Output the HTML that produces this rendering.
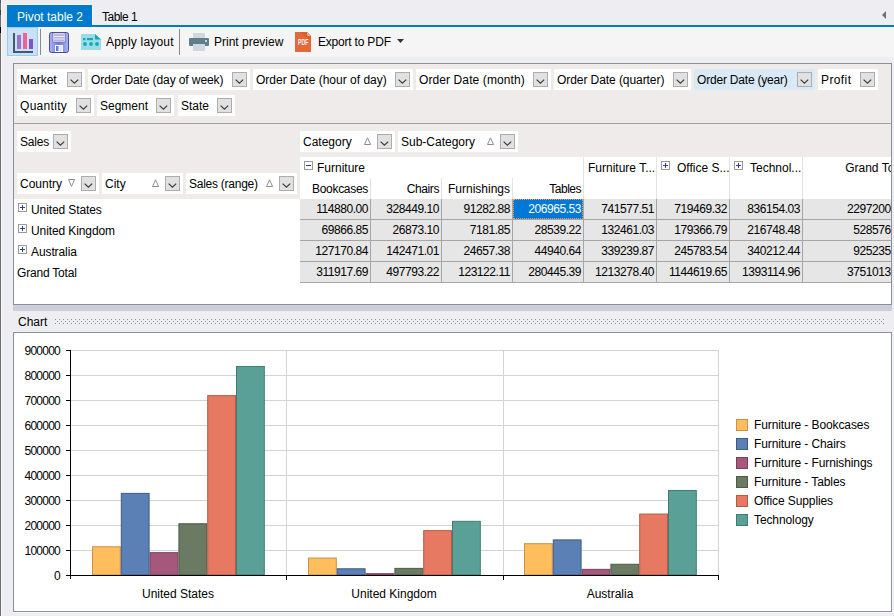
<!DOCTYPE html><html><head><meta charset="utf-8"><style>
html,body{margin:0;padding:0;}
body{width:894px;height:616px;overflow:hidden;position:relative;background:#EEEEF2;font-family:"Liberation Sans", sans-serif;font-size:12px;color:#000;}
.a{position:absolute;}
.t{position:absolute;white-space:pre;line-height:14px;font-size:12px;}
.r{text-align:right;}
.dd{position:absolute;width:13px;height:13px;border:1px solid #ADADAD;background:#E1E1E1;}
.dd svg{position:absolute;left:-1px;top:-1px;}
</style></head><body>

<div class="a" style="left:0px;top:0px;width:1px;height:616px;background:#6D6D6D"></div>
<div class="a" style="left:1px;top:0px;width:1px;height:616px;background:#F8F8F8"></div>
<div class="a" style="left:0px;top:27px;width:1px;height:6px;background:#000"></div>
<div class="a" style="left:0px;top:10px;width:1px;height:5px;background:#3A3A3A"></div>
<div class="a" style="left:0px;top:0px;width:1px;height:3px;background:#4A5A6A"></div>
<div class="a" style="left:6px;top:4px;width:87px;height:1px;background:#FBF6F4"></div>
<div class="a" style="left:92px;top:4px;width:1px;height:21px;background:#FBF6F4"></div>
<div class="a" style="left:7px;top:5px;width:85px;height:22px;background:#007ACC"></div>
<div class="t " style="left:17px;top:10px;color:#fff">Pivot table 2</div>
<div class="t " style="left:102px;top:10px;letter-spacing:-0.5px">Table 1</div>
<div class="a" style="left:7px;top:25px;width:887px;height:2px;background:#007ACC"></div>
<svg class="a" style="left:881px;top:11px" width="6" height="9"><path d="M5 0 L5 8 L1 4 Z" fill="#707070"/></svg>
<div class="a" style="left:7px;top:27px;width:887px;height:30px;background:#F5F5F5"></div>
<div class="a" style="left:7px;top:27px;width:31px;height:29px;background:#C9E0F7;box-sizing:border-box;border:1px solid #99CCF5"></div>
<svg class="a" style="left:13px;top:33px" width="21" height="21">
<rect x="0" y="0" width="2" height="20" fill="#455A64"/>
<rect x="0" y="18" width="20" height="2" fill="#455A64"/>
<rect x="4" y="2" width="4" height="14" fill="#9575CD"/>
<rect x="10" y="0" width="4" height="16" fill="#F06292"/>
<rect x="16" y="6" width="4" height="10" fill="#7E57C2"/>
</svg>
<div class="a" style="left:40px;top:29px;width:1px;height:26px;background:#8A8A8A"></div>
<svg class="a" style="left:49px;top:32px" width="21" height="21">
<defs><linearGradient id="fg" x1="0" x2="1" y1="0" y2="0"><stop offset="0" stop-color="#A8B4F4"/><stop offset="0.5" stop-color="#6C7CD8"/><stop offset="1" stop-color="#A8B4F4"/></linearGradient></defs>
<rect x="0.5" y="0.5" width="19" height="20" rx="2" fill="url(#fg)" stroke="#4C4C9C"/>
<rect x="4" y="1" width="12" height="9" fill="#fff" stroke="#5A5AA8" stroke-width="0.6"/>
<rect x="5" y="2.2" width="10" height="1.8" fill="#B4B0E0"/>
<rect x="5" y="4.8" width="10" height="1.8" fill="#B4B0E0"/>
<rect x="5" y="7.4" width="10" height="1.8" fill="#B4B0E0"/>
<rect x="6" y="13" width="8" height="7" fill="#fff"/><rect x="10.5" y="13.5" width="3" height="6" fill="#E4E4F0"/>
<rect x="7" y="14" width="2.5" height="5" fill="#5C7AE0"/>
</svg>
<svg class="a" style="left:81px;top:34px" width="20" height="16">
<path d="M0 0 L14 0 L20 5.5 L20 16 L0 16 Z" fill="#9EDCE5"/>
<path d="M14 0 L20 5.5 L14 5.5 Z" fill="#12A9BE"/>
<rect x="2" y="4" width="2.5" height="2.2" fill="#12A9BE"/>
<rect x="6" y="4" width="6" height="2.2" fill="#12A9BE"/>
<circle cx="4" cy="10" r="1.9" fill="#12A9BE"/>
<circle cx="10" cy="10" r="1.9" fill="#12A9BE"/>
<circle cx="16" cy="10" r="1.9" fill="#12A9BE"/>
</svg>
<div class="t " style="left:106px;top:35px;letter-spacing:0.2px">Apply layout</div>
<div class="a" style="left:179px;top:29px;width:1px;height:26px;background:#8A8A8A"></div>
<svg class="a" style="left:189px;top:33px" width="20" height="18">
<rect x="4" y="0" width="12" height="5" fill="#CFD8DC"/>
<rect x="0" y="5" width="20" height="8" rx="1" fill="#607D8B"/>
<rect x="4" y="11" width="12" height="7" fill="#CFD8DC"/>
<rect x="16" y="7" width="2" height="2" fill="#CFD8DC"/>
</svg>
<div class="t " style="left:214px;top:35px;">Print preview</div>
<svg class="a" style="left:295px;top:32px" width="16" height="20">
<path d="M0 0 L12 0 L16 4 L16 20 L0 20 Z" fill="#E5683A"/>
<path d="M4 0 L12 0 L16 4 L16 9 Z" fill="#D95F34"/>
<path d="M12 0 L16 4 L13.5 4 Q12 4 12 2.5 Z" fill="#F5B293"/>
<text x="3" y="13" font-family="Liberation Sans" font-weight="bold" font-size="8.5" fill="#F4F4F4" textLength="10.5" lengthAdjust="spacingAndGlyphs">PDF</text>
</svg>
<div class="t " style="left:318px;top:35px;letter-spacing:-0.2px">Export to PDF</div>
<svg class="a" style="left:397px;top:39px" width="8" height="5"><path d="M0 0 L7 0 L3.5 4 Z" fill="#333"/></svg>
<div class="a" style="left:13px;top:63px;width:879px;height:242px;box-sizing:border-box;border:1px solid #8A8F99;background:#EFEBEB"></div>
<div class="a" style="left:17px;top:69px;width:68px;height:21px;background:#fff"></div>
<div class="t " style="left:20px;top:73px;letter-spacing:0px">Market</div>
<div class="dd" style="left:67px;top:72px"><svg width="15" height="15"><path d="M3.6 7.6 L7.4 11.2 L11.2 7.6" fill="none" stroke="#3C3C3C" stroke-width="1.25"/></svg></div>
<div class="a" style="left:88px;top:69px;width:162px;height:21px;background:#fff"></div>
<div class="t " style="left:91px;top:73px;letter-spacing:-0.1px">Order Date (day of week)</div>
<div class="dd" style="left:232px;top:72px"><svg width="15" height="15"><path d="M3.6 7.6 L7.4 11.2 L11.2 7.6" fill="none" stroke="#3C3C3C" stroke-width="1.25"/></svg></div>
<div class="a" style="left:253px;top:69px;width:160px;height:21px;background:#fff"></div>
<div class="t " style="left:256px;top:73px;letter-spacing:0px">Order Date (hour of day)</div>
<div class="dd" style="left:395px;top:72px"><svg width="15" height="15"><path d="M3.6 7.6 L7.4 11.2 L11.2 7.6" fill="none" stroke="#3C3C3C" stroke-width="1.25"/></svg></div>
<div class="a" style="left:416px;top:69px;width:135px;height:21px;background:#fff"></div>
<div class="t " style="left:419px;top:73px;letter-spacing:0.1px">Order Date (month)</div>
<div class="dd" style="left:533px;top:72px"><svg width="15" height="15"><path d="M3.6 7.6 L7.4 11.2 L11.2 7.6" fill="none" stroke="#3C3C3C" stroke-width="1.25"/></svg></div>
<div class="a" style="left:554px;top:69px;width:137px;height:21px;background:#fff"></div>
<div class="t " style="left:557px;top:73px;letter-spacing:-0.07px">Order Date (quarter)</div>
<div class="dd" style="left:673px;top:72px"><svg width="15" height="15"><path d="M3.6 7.6 L7.4 11.2 L11.2 7.6" fill="none" stroke="#3C3C3C" stroke-width="1.25"/></svg></div>
<div class="a" style="left:694px;top:69px;width:121px;height:21px;background:#DAE9F8"></div>
<div class="t " style="left:697px;top:73px;letter-spacing:-0.2px">Order Date (year)</div>
<div class="dd" style="left:797px;top:72px"><svg width="15" height="15"><path d="M3.6 7.6 L7.4 11.2 L11.2 7.6" fill="none" stroke="#3C3C3C" stroke-width="1.25"/></svg></div>
<div class="a" style="left:818px;top:69px;width:60px;height:21px;background:#fff"></div>
<div class="t " style="left:821px;top:73px;letter-spacing:0.4px">Profit</div>
<div class="dd" style="left:860px;top:72px"><svg width="15" height="15"><path d="M3.6 7.6 L7.4 11.2 L11.2 7.6" fill="none" stroke="#3C3C3C" stroke-width="1.25"/></svg></div>
<div class="a" style="left:17px;top:95px;width:77px;height:21px;background:#fff"></div>
<div class="t " style="left:20px;top:99px;letter-spacing:0.3px">Quantity</div>
<div class="dd" style="left:76px;top:98px"><svg width="15" height="15"><path d="M3.6 7.6 L7.4 11.2 L11.2 7.6" fill="none" stroke="#3C3C3C" stroke-width="1.25"/></svg></div>
<div class="a" style="left:97px;top:95px;width:77px;height:21px;background:#fff"></div>
<div class="t " style="left:100px;top:99px;letter-spacing:0px">Segment</div>
<div class="dd" style="left:156px;top:98px"><svg width="15" height="15"><path d="M3.6 7.6 L7.4 11.2 L11.2 7.6" fill="none" stroke="#3C3C3C" stroke-width="1.25"/></svg></div>
<div class="a" style="left:178px;top:95px;width:57px;height:21px;background:#fff"></div>
<div class="t " style="left:181px;top:99px;letter-spacing:0px">State</div>
<div class="dd" style="left:217px;top:98px"><svg width="15" height="15"><path d="M3.6 7.6 L7.4 11.2 L11.2 7.6" fill="none" stroke="#3C3C3C" stroke-width="1.25"/></svg></div>
<div class="a" style="left:14px;top:123px;width:877px;height:1px;background:#A0A0A0"></div>
<div class="a" style="left:17px;top:131px;width:54px;height:21px;background:#fff"></div>
<div class="t " style="left:20px;top:135px;letter-spacing:-0.2px">Sales</div>
<div class="dd" style="left:53px;top:134px"><svg width="15" height="15"><path d="M3.6 7.6 L7.4 11.2 L11.2 7.6" fill="none" stroke="#3C3C3C" stroke-width="1.25"/></svg></div>
<div class="a" style="left:300px;top:131px;width:95px;height:21px;background:#fff"></div>
<div class="t " style="left:303px;top:135px;letter-spacing:0px">Category</div>
<div class="dd" style="left:377px;top:134px"><svg width="15" height="15"><path d="M3.6 7.6 L7.4 11.2 L11.2 7.6" fill="none" stroke="#3C3C3C" stroke-width="1.25"/></svg></div>
<svg class="a" style="left:364px;top:137px" width="8" height="9"><path d="M3.5 0.8 L6.6 7.5 L0.5 7.5 Z" fill="none" stroke="#8c8c8c" stroke-width="1"/></svg>
<div class="a" style="left:398px;top:131px;width:120px;height:21px;background:#fff"></div>
<div class="t " style="left:401px;top:135px;letter-spacing:0px">Sub-Category</div>
<div class="dd" style="left:500px;top:134px"><svg width="15" height="15"><path d="M3.6 7.6 L7.4 11.2 L11.2 7.6" fill="none" stroke="#3C3C3C" stroke-width="1.25"/></svg></div>
<svg class="a" style="left:487px;top:137px" width="8" height="9"><path d="M3.5 0.8 L6.6 7.5 L0.5 7.5 Z" fill="none" stroke="#8c8c8c" stroke-width="1"/></svg>
<div class="a" style="left:17px;top:173px;width:82px;height:21px;background:#fff"></div>
<div class="t " style="left:20px;top:177px;letter-spacing:0px">Country</div>
<div class="dd" style="left:81px;top:176px"><svg width="15" height="15"><path d="M3.6 7.6 L7.4 11.2 L11.2 7.6" fill="none" stroke="#3C3C3C" stroke-width="1.25"/></svg></div>
<svg class="a" style="left:68px;top:179px" width="8" height="9"><path d="M0.5 0.5 L6.6 0.5 L3.5 7.4 Z" fill="none" stroke="#8c8c8c" stroke-width="1"/></svg>
<div class="a" style="left:102px;top:173px;width:81px;height:21px;background:#fff"></div>
<div class="t " style="left:105px;top:177px;letter-spacing:0px">City</div>
<div class="dd" style="left:165px;top:176px"><svg width="15" height="15"><path d="M3.6 7.6 L7.4 11.2 L11.2 7.6" fill="none" stroke="#3C3C3C" stroke-width="1.25"/></svg></div>
<svg class="a" style="left:152px;top:179px" width="8" height="9"><path d="M3.5 0.8 L6.6 7.5 L0.5 7.5 Z" fill="none" stroke="#8c8c8c" stroke-width="1"/></svg>
<div class="a" style="left:186px;top:173px;width:111px;height:21px;background:#fff"></div>
<div class="t " style="left:189px;top:177px;letter-spacing:-0.25px">Sales (range)</div>
<div class="dd" style="left:279px;top:176px"><svg width="15" height="15"><path d="M3.6 7.6 L7.4 11.2 L11.2 7.6" fill="none" stroke="#3C3C3C" stroke-width="1.25"/></svg></div>
<svg class="a" style="left:266px;top:179px" width="8" height="9"><path d="M3.5 0.8 L6.6 7.5 L0.5 7.5 Z" fill="none" stroke="#8c8c8c" stroke-width="1"/></svg>
<div class="a" style="left:14px;top:199px;width:286px;height:105px;background:#fff"></div>
<svg class="a" style="left:18px;top:203px" width="9" height="9"><rect x="0.5" y="0.5" width="8" height="8" fill="#fff" stroke="#9A9A9A"/><rect x="2" y="4" width="5" height="1" fill="#2B3F8C"/><rect x="4" y="2" width="1" height="5" fill="#2B3F8C"/></svg>
<div class="t " style="left:31px;top:203px;letter-spacing:-0.1px">United States</div>
<svg class="a" style="left:18px;top:224px" width="9" height="9"><rect x="0.5" y="0.5" width="8" height="8" fill="#fff" stroke="#9A9A9A"/><rect x="2" y="4" width="5" height="1" fill="#2B3F8C"/><rect x="4" y="2" width="1" height="5" fill="#2B3F8C"/></svg>
<div class="t " style="left:31px;top:224px;letter-spacing:-0.1px">United Kingdom</div>
<svg class="a" style="left:18px;top:245px" width="9" height="9"><rect x="0.5" y="0.5" width="8" height="8" fill="#fff" stroke="#9A9A9A"/><rect x="2" y="4" width="5" height="1" fill="#2B3F8C"/><rect x="4" y="2" width="1" height="5" fill="#2B3F8C"/></svg>
<div class="t " style="left:31px;top:245px;letter-spacing:-0.1px">Australia</div>
<div class="t " style="left:17px;top:266px;letter-spacing:-0.2px">Grand Total</div>
<div class="a" style="left:300px;top:157px;width:591px;height:147px;background:#fff"></div>
<svg class="a" style="left:304px;top:161px" width="9" height="9"><rect x="0.5" y="0.5" width="8" height="8" fill="#fff" stroke="#9A9A9A"/><rect x="2" y="4" width="5" height="1" fill="#2B3F8C"/></svg>
<div class="t " style="left:317px;top:161px;">Furniture</div>
<div class="a" style="left:370px;top:178px;width:1px;height:21px;background:#E3E3E3"></div>
<div class="a" style="left:441px;top:178px;width:1px;height:21px;background:#E3E3E3"></div>
<div class="a" style="left:512px;top:178px;width:1px;height:21px;background:#E3E3E3"></div>
<div class="a" style="left:583px;top:157px;width:1px;height:42px;background:#E3E3E3"></div>
<div class="a" style="left:656px;top:157px;width:1px;height:42px;background:#E3E3E3"></div>
<div class="a" style="left:729px;top:157px;width:1px;height:42px;background:#E3E3E3"></div>
<div class="a" style="left:802px;top:157px;width:1px;height:42px;background:#E3E3E3"></div>
<div class="t r " style="right:526px;top:182px;letter-spacing:-0.3px">Bookcases</div>
<div class="t r " style="right:455px;top:182px;letter-spacing:-0.4px">Chairs</div>
<div class="t r " style="right:384px;top:182px;">Furnishings</div>
<div class="t r " style="right:313px;top:182px;letter-spacing:-0.5px">Tables</div>
<div class="t " style="left:588px;top:161px;">Furniture T...</div>
<svg class="a" style="left:661px;top:161px" width="9" height="9"><rect x="0.5" y="0.5" width="8" height="8" fill="#fff" stroke="#9A9A9A"/><rect x="2" y="4" width="5" height="1" fill="#2B3F8C"/><rect x="4" y="2" width="1" height="5" fill="#2B3F8C"/></svg>
<div class="t " style="left:677px;top:161px;">Office S...</div>
<svg class="a" style="left:734px;top:161px" width="9" height="9"><rect x="0.5" y="0.5" width="8" height="8" fill="#fff" stroke="#9A9A9A"/><rect x="2" y="4" width="5" height="1" fill="#2B3F8C"/><rect x="4" y="2" width="1" height="5" fill="#2B3F8C"/></svg>
<div class="t " style="left:750px;top:161px;">Technol...</div>
<div class="t r " style="right:-13px;top:161px;">Grand Total</div>
<div class="a" style="left:300px;top:199px;width:591px;height:84px;background:#E6E6E6"></div>
<div class="a" style="left:300px;top:219px;width:591px;height:1px;background:#A6A6A6"></div>
<div class="a" style="left:300px;top:240px;width:591px;height:1px;background:#A6A6A6"></div>
<div class="a" style="left:300px;top:261px;width:591px;height:1px;background:#A6A6A6"></div>
<div class="a" style="left:300px;top:282px;width:591px;height:1px;background:#A6A6A6"></div>
<div class="a" style="left:370px;top:199px;width:1px;height:84px;background:#A6A6A6"></div>
<div class="a" style="left:441px;top:199px;width:1px;height:84px;background:#A6A6A6"></div>
<div class="a" style="left:512px;top:199px;width:1px;height:84px;background:#A6A6A6"></div>
<div class="a" style="left:583px;top:199px;width:1px;height:84px;background:#A6A6A6"></div>
<div class="a" style="left:656px;top:199px;width:1px;height:84px;background:#A6A6A6"></div>
<div class="a" style="left:729px;top:199px;width:1px;height:84px;background:#A6A6A6"></div>
<div class="a" style="left:802px;top:199px;width:1px;height:84px;background:#A6A6A6"></div>
<div class="a" style="left:513px;top:199px;width:70px;height:20px;background:#0078D7;box-sizing:border-box;border:1px dotted #F0A050"></div>
<div class="t r " style="right:526px;top:202px;letter-spacing:-0.45px;">114880.00</div>
<div class="t r " style="right:455px;top:202px;letter-spacing:-0.45px;">328449.10</div>
<div class="t r " style="right:384px;top:202px;letter-spacing:-0.45px;">91282.88</div>
<div class="t r " style="right:313px;top:202px;letter-spacing:-0.45px;color:#fff;">206965.53</div>
<div class="t r " style="right:240px;top:202px;letter-spacing:-0.45px;">741577.51</div>
<div class="t r " style="right:167px;top:202px;letter-spacing:-0.45px;">719469.32</div>
<div class="t r " style="right:94px;top:202px;letter-spacing:-0.45px;">836154.03</div>
<div class="t r " style="right:-12px;top:202px;letter-spacing:-0.45px;">2297200.86</div>
<div class="t r " style="right:526px;top:223px;letter-spacing:-0.45px;">69866.85</div>
<div class="t r " style="right:455px;top:223px;letter-spacing:-0.45px;">26873.10</div>
<div class="t r " style="right:384px;top:223px;letter-spacing:-0.45px;">7181.85</div>
<div class="t r " style="right:313px;top:223px;letter-spacing:-0.45px;">28539.22</div>
<div class="t r " style="right:240px;top:223px;letter-spacing:-0.45px;">132461.03</div>
<div class="t r " style="right:167px;top:223px;letter-spacing:-0.45px;">179366.79</div>
<div class="t r " style="right:94px;top:223px;letter-spacing:-0.45px;">216748.48</div>
<div class="t r " style="right:-12px;top:223px;letter-spacing:-0.45px;">528576.30</div>
<div class="t r " style="right:526px;top:244px;letter-spacing:-0.45px;">127170.84</div>
<div class="t r " style="right:455px;top:244px;letter-spacing:-0.45px;">142471.01</div>
<div class="t r " style="right:384px;top:244px;letter-spacing:-0.45px;">24657.38</div>
<div class="t r " style="right:313px;top:244px;letter-spacing:-0.45px;">44940.64</div>
<div class="t r " style="right:240px;top:244px;letter-spacing:-0.45px;">339239.87</div>
<div class="t r " style="right:167px;top:244px;letter-spacing:-0.45px;">245783.54</div>
<div class="t r " style="right:94px;top:244px;letter-spacing:-0.45px;">340212.44</div>
<div class="t r " style="right:-12px;top:244px;letter-spacing:-0.45px;">925235.85</div>
<div class="t r " style="right:526px;top:265px;letter-spacing:-0.45px;">311917.69</div>
<div class="t r " style="right:455px;top:265px;letter-spacing:-0.45px;">497793.22</div>
<div class="t r " style="right:384px;top:265px;letter-spacing:-0.45px;">123122.11</div>
<div class="t r " style="right:313px;top:265px;letter-spacing:-0.45px;">280445.39</div>
<div class="t r " style="right:240px;top:265px;letter-spacing:-0.45px;">1213278.40</div>
<div class="t r " style="right:167px;top:265px;letter-spacing:-0.45px;">1144619.65</div>
<div class="t r " style="right:94px;top:265px;letter-spacing:-0.45px;">1393114.96</div>
<div class="t r " style="right:-12px;top:265px;letter-spacing:-0.45px;">3751013.01</div>
<div class="a" style="left:891px;top:63px;width:3px;height:242px;background:#EEEEF2"></div>
<div class="a" style="left:891px;top:63px;width:1px;height:242px;background:#8A8F99"></div>
<div class="a" style="left:13px;top:305px;width:879px;height:6px;background:#CCCEDB"></div>
<div class="t " style="left:18px;top:315px;">Chart</div>
<svg class="a" style="left:55px;top:319px" width="829" height="5"><defs><pattern id="dots" width="4" height="4" patternUnits="userSpaceOnUse"><rect x="0" y="0" width="1" height="1" fill="#8C8C8C"/><rect x="2" y="2" width="1" height="1" fill="#8C8C8C"/></pattern></defs><rect width="829" height="5" fill="url(#dots)"/></svg>
<div class="a" style="left:13px;top:332px;width:879px;height:280px;box-sizing:border-box;border:1px solid #8A8F99;background:#fff"></div>
<div class="a" style="left:892px;top:333px;width:1px;height:280px;background:#F7F7F9"></div>
<div class="a" style="left:14px;top:612px;width:879px;height:1px;background:#F7F7F9"></div>
<svg class="a" style="left:0;top:0" width="894" height="616" shape-rendering="crispEdges">
<rect x="71" y="550" width="647" height="1" fill="#D3D3D3"/>
<rect x="71" y="525" width="647" height="1" fill="#D3D3D3"/>
<rect x="71" y="500" width="647" height="1" fill="#D3D3D3"/>
<rect x="71" y="475" width="647" height="1" fill="#D3D3D3"/>
<rect x="71" y="450" width="647" height="1" fill="#D3D3D3"/>
<rect x="71" y="425" width="647" height="1" fill="#D3D3D3"/>
<rect x="71" y="400" width="647" height="1" fill="#D3D3D3"/>
<rect x="71" y="375" width="647" height="1" fill="#D3D3D3"/>
<rect x="71" y="350" width="647" height="1" fill="#D3D3D3"/>
<rect x="286" y="350" width="1" height="225" fill="#D3D3D3"/>
<rect x="503" y="350" width="1" height="225" fill="#D3D3D3"/>
<rect x="718" y="350" width="1" height="225" fill="#D3D3D3"/>
</svg>
<svg class="a" style="left:0;top:0" width="894" height="616">
<rect x="92.50" y="546.78" width="27.80" height="28.22" fill="#FFBE5E" stroke="#C8924A" stroke-width="1"/>
<rect x="121.30" y="493.39" width="27.80" height="81.61" fill="#5B80B6" stroke="#3E5A86" stroke-width="1"/>
<rect x="150.10" y="552.68" width="27.80" height="22.32" fill="#A5587C" stroke="#7A3E5C" stroke-width="1"/>
<rect x="178.90" y="523.76" width="27.80" height="51.24" fill="#6B7B63" stroke="#4E5B47" stroke-width="1"/>
<rect x="207.70" y="395.63" width="27.80" height="179.37" fill="#E77862" stroke="#B45A48" stroke-width="1"/>
<rect x="236.50" y="366.46" width="27.80" height="208.54" fill="#5BA096" stroke="#3F7A72" stroke-width="1"/>
<rect x="308.50" y="558.03" width="27.80" height="16.97" fill="#FFBE5E" stroke="#C8924A" stroke-width="1"/>
<rect x="337.30" y="568.78" width="27.80" height="6.22" fill="#5B80B6" stroke="#3E5A86" stroke-width="1"/>
<rect x="366.10" y="573.70" width="27.80" height="1.30" fill="#A5587C" stroke="#7A3E5C" stroke-width="1"/>
<rect x="394.90" y="568.37" width="27.80" height="6.63" fill="#6B7B63" stroke="#4E5B47" stroke-width="1"/>
<rect x="423.70" y="530.66" width="27.80" height="44.34" fill="#E77862" stroke="#B45A48" stroke-width="1"/>
<rect x="452.50" y="521.31" width="27.80" height="53.69" fill="#5BA096" stroke="#3F7A72" stroke-width="1"/>
<rect x="524.50" y="543.71" width="27.80" height="31.29" fill="#FFBE5E" stroke="#C8924A" stroke-width="1"/>
<rect x="553.30" y="539.88" width="27.80" height="35.12" fill="#5B80B6" stroke="#3E5A86" stroke-width="1"/>
<rect x="582.10" y="569.34" width="27.80" height="5.66" fill="#A5587C" stroke="#7A3E5C" stroke-width="1"/>
<rect x="610.90" y="564.26" width="27.80" height="10.74" fill="#6B7B63" stroke="#4E5B47" stroke-width="1"/>
<rect x="639.70" y="514.05" width="27.80" height="60.95" fill="#E77862" stroke="#B45A48" stroke-width="1"/>
<rect x="668.50" y="490.45" width="27.80" height="84.55" fill="#5BA096" stroke="#3F7A72" stroke-width="1"/>
<rect x="70" y="350" width="1" height="229" fill="#000"/>
<rect x="66" y="575" width="652" height="1" fill="#000"/>
<rect x="66" y="575" width="4" height="1" fill="#000"/>
<rect x="66" y="550" width="4" height="1" fill="#000"/>
<rect x="66" y="525" width="4" height="1" fill="#000"/>
<rect x="66" y="500" width="4" height="1" fill="#000"/>
<rect x="66" y="475" width="4" height="1" fill="#000"/>
<rect x="66" y="450" width="4" height="1" fill="#000"/>
<rect x="66" y="425" width="4" height="1" fill="#000"/>
<rect x="66" y="400" width="4" height="1" fill="#000"/>
<rect x="66" y="375" width="4" height="1" fill="#000"/>
<rect x="66" y="350" width="4" height="1" fill="#000"/>
<rect x="286" y="575" width="1" height="5" fill="#000"/>
<rect x="503" y="575" width="1" height="5" fill="#000"/>
<rect x="718" y="575" width="1" height="5" fill="#000"/>
</svg>
<div class="t r " style="right:834px;top:569px;letter-spacing:-0.75px">0</div>
<div class="t r " style="right:834px;top:544px;letter-spacing:-0.75px">100000</div>
<div class="t r " style="right:834px;top:519px;letter-spacing:-0.75px">200000</div>
<div class="t r " style="right:834px;top:494px;letter-spacing:-0.75px">300000</div>
<div class="t r " style="right:834px;top:469px;letter-spacing:-0.75px">400000</div>
<div class="t r " style="right:834px;top:444px;letter-spacing:-0.75px">500000</div>
<div class="t r " style="right:834px;top:419px;letter-spacing:-0.75px">600000</div>
<div class="t r " style="right:834px;top:394px;letter-spacing:-0.75px">700000</div>
<div class="t r " style="right:834px;top:369px;letter-spacing:-0.75px">800000</div>
<div class="t r " style="right:834px;top:344px;letter-spacing:-0.75px">900000</div>
<div class="t" style="left:78.0px;width:200px;text-align:center;top:587px">United States</div>
<div class="t" style="left:294.0px;width:200px;text-align:center;top:587px">United Kingdom</div>
<div class="t" style="left:510.0px;width:200px;text-align:center;top:587px">Australia</div>
<svg class="a" style="left:736px;top:419px" width="12" height="12"><rect x="0.5" y="0.5" width="11" height="11" fill="#FFBE5E" stroke="#C8924A"/></svg>
<div class="t " style="left:754px;top:418px;letter-spacing:-0.1px">Furniture - Bookcases</div>
<svg class="a" style="left:736px;top:438px" width="12" height="12"><rect x="0.5" y="0.5" width="11" height="11" fill="#5B80B6" stroke="#3E5A86"/></svg>
<div class="t " style="left:754px;top:437px;letter-spacing:-0.1px">Furniture - Chairs</div>
<svg class="a" style="left:736px;top:457px" width="12" height="12"><rect x="0.5" y="0.5" width="11" height="11" fill="#A5587C" stroke="#7A3E5C"/></svg>
<div class="t " style="left:754px;top:456px;letter-spacing:-0.1px">Furniture - Furnishings</div>
<svg class="a" style="left:736px;top:476px" width="12" height="12"><rect x="0.5" y="0.5" width="11" height="11" fill="#6B7B63" stroke="#4E5B47"/></svg>
<div class="t " style="left:754px;top:475px;letter-spacing:-0.1px">Furniture - Tables</div>
<svg class="a" style="left:736px;top:495px" width="12" height="12"><rect x="0.5" y="0.5" width="11" height="11" fill="#E77862" stroke="#B45A48"/></svg>
<div class="t " style="left:754px;top:494px;letter-spacing:-0.1px">Office Supplies</div>
<svg class="a" style="left:736px;top:514px" width="12" height="12"><rect x="0.5" y="0.5" width="11" height="11" fill="#5BA096" stroke="#3F7A72"/></svg>
<div class="t " style="left:754px;top:513px;letter-spacing:-0.1px">Technology</div>
</body></html>
